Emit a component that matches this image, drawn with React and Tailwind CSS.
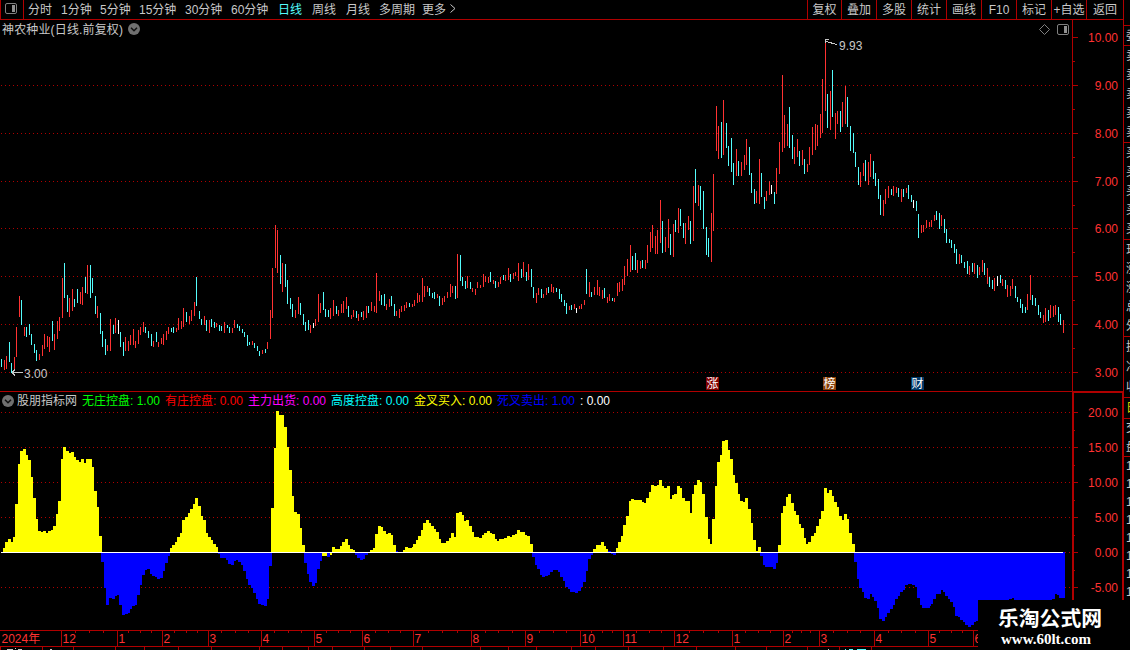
// src/App.jsx
import React from 'react';

const FONT = "font-['Liberation_Sans','Noto_Sans_CJK_SC',sans-serif]";
const LINE = '#b00000';
const LABEL = '#ff3232';

const PERIODS = [
  { label: '分时', width: 'w-[33px]' },
  { label: '1分钟', width: 'w-[39px]' },
  { label: '5分钟', width: 'w-[39px]' },
  { label: '15分钟', width: 'w-[46px]' },
  { label: '30分钟', width: 'w-[46px]' },
  { label: '60分钟', width: 'w-[47px]' },
  { label: '日线', width: 'w-[34px]', active: true },
  { label: '周线', width: 'w-[34px]' },
  { label: '月线', width: 'w-[33px]' },
  { label: '多周期', width: 'w-[43px]' },
  { label: '更多', width: 'w-[28px]' },
];

const TOOLS = [
  { label: '复权', width: 'w-[34px]' },
  { label: '叠加', width: 'w-[35px]' },
  { label: '多股', width: 'w-[35px]' },
  { label: '统计', width: 'w-[35px]' },
  { label: '画线', width: 'w-[35px]' },
  { label: 'F10', width: 'w-[35px]' },
  { label: '标记', width: 'w-[35px]' },
  { label: '+自选', width: 'w-[35px]' },
  { label: '返回', width: 'w-[37px]' },
];

const INDICATORS = [
  { label: '无庄控盘: 1.00', color: 'text-[#00ff00]', width: 'w-[83px]' },
  { label: '有庄控盘: 0.00', color: 'text-[#ff0000]', width: 'w-[83px]' },
  { label: '主力出货: 0.00', color: 'text-[#ff00ff]', width: 'w-[83px]' },
  { label: '高度控盘: 0.00', color: 'text-[#00ffff]', width: 'w-[83px]' },
  { label: '金叉买入: 0.00', color: 'text-[#ffff00]', width: 'w-[83px]' },
  { label: '死叉卖出: 1.00', color: 'text-[#0000ff]', width: 'w-[83px]' },
  { label: ': 0.00', color: 'text-white', width: 'w-[40px]' },
];

// x, direction (r = up, c = down, w = flat), high-low
const CANDLES = `
1c359-367 4r360-370 6r356-369 9c342-362 11c363-373 14r357-369 16r327-357 19r296-317 21c300-325 24r327-336
26c327-337 29c324-335 31c334-345 34c344-353 36c350-361 39r354-360 42r345-356 44r334-349 47r336-347 49r337-352
52c321-341 54r334-350 57r321-339 59r317-331 62r278-318 64c263-298 67c295-312 69r298-317 72r289-311 74c299-307
77c289-303 80r292-304 82r287-305 85c277-293 87r265-294 90c265-298 92c278-293 95c296-314 97r306-318 100c313-334
102c331-347 105c339-355 107r345-351 110r319-351 113c325-334 115r318-333 118w320-334 120c332-347 123c342-356
125r337-351 128r341-351 130r335-345 133r329-345 135r341-348 138r330-344 140r327-335 143r322-332 145c327-333
148c331-338 151c334-346 153r341-347 156c332-342 158r342-347 161r338-344 163r334-345 166r331-340 168r327-334
171c328-332 173c327-333 176r328-332 178r318-330 181r321-329 183r308-327 186c312-322 189r316-324 191r310-321
194r302-316 196c277-306 199c311-319 201c319-325 204r316-325 206c320-331 209r320-333 211c319-327 214c322-328
216r323-327 219c325-331 221c326-331 224r322-333 227c325-328 229c327-333 232r328-333 234r320-328 237c324-328
239c326-331 242c329-333 244c332-337 247c335-346 249c342-345 252r341-345 254c343-348 257c346-351 259c351-356
262r350-354 265c349-353 267r342-349 270r310-339 272r268-318 275r225-268 277r230-273 280c255-284 282r263-292
285c264-287 287c280-304 290c298-309 292c304-317 295r310-318 298r297-314 300c303-315 303c314-325 305c322-331
308c320-330 310r325-333 313w323-328 315r319-326 318r294-322 320r303-313 323c292-310 325c309-317 328c310-317
330r308-319 333r300-316 336c306-314 338r310-316 341r304-313 343r301-313 346r297-309 348c306-317 351r315-319
353r310-317 356c311-318 358r314-321 361c312-317 363r311-320 366r306-318 368c306-313 371r302-311 374r306-312
376r273-313 379r291-301 381c295-305 384c294-306 386r304-310 389r299-307 391c296-306 394c304-316 396r311-316
399r309-318 401r306-312 404r305-311 406r302-308 409c303-307 412r304-307 414r300-306 417r293-303 419r295-302
422r278-302 424r286-297 427r286-292 429c288-296 432c293-298 434c292-299 437r294-298 439c296-306 442r298-305
444r296-302 447r292-298 450r284-297 452r286-293 455c286-299 457r254-298 460c255-281 462c277-286 465c281-289
467r276-288 470c282-289 472r288-292 475r289-295 477r282-288 480r285-288 483r274-287 485r276-282 488r277-283
490c272-282 493r280-284 495c281-288 498r282-287 500r277-284 503c275-280 505r275-281 508r268-280 510c274-282
513r273-279 515r272-276 518r263-281 521c269-278 523r262-277 526c272-281 528r264-280 531c269-287 533c287-298
536r293-303 538r288-295 541c289-298 543r294-298 546r288-295 548c287-293 551r284-292 553r287-293 556c288-292
559c289-299 561c294-302 564c300-306 566c303-314 569r306-310 571c305-310 574r304-309 576w308-313 579r306-309
581r304-309 584r300-305 586c269-294 589r282-297 591c292-297 594r287-295 597r280-295 599r287-296 602r290-299
604c288-298 607r297-303 609r294-301 612c298-301 614r298-302 617r283-296 619r282-292 622r279-291 624r266-285
627r259-276 630r245-272 632c256-270 635c253-270 637r260-273 640r261-269 642c260-268 645r260-269 647r245-263
650r232-252 652r225-248 655r236-254 657r230-254 660r200-243 662c221-253 665r237-252 668r219-248 670c234-255
673r224-257 675c220-232 678r208-233 680c209-226 683c223-238 685r223-244 688r216-230 690c221-244 693r186-241
695c169-203 698r185-206 700c186-210 703c191-229 706c227-255 708c238-257 711r213-262 713r174-231 716r106-151
718r126-159 721c122-158 723r100-155 726c123-148 728c146-166 731c138-172 733c163-185 736r149-176 738c161-176
741r162-176 744r155-170 746r139-165 749c147-175 751c173-193 754c189-204 756r191-203 759r159-204 761c173-197
764c197-209 766r191-201 769r181-195 771w185-194 774c192-204 776r168-194 779r142-174 782r75-152 784r115-148
787r124-146 789c107-148 792c135-159 794r147-164 797r139-157 799c151-166 802r150-165 804c159-174 807r164-172
809r147-165 812r127-155 815r124-150 817r125-146 820r114-138 822r79-133 825r41-111 827c94-128 830r91-130
832c70-117 835r113-139 837r111-124 840c111-132 842r102-127 845r86-124 847c97-127 850c126-151 853c133-153
855c152-167 858c167-185 860r172-187 863r163-176 865c160-181 868r162-185 870r154-177 873c161-179 875c173-186
878c179-199 880c195-215 883r200-216 885r189-204 888r186-198 891c189-195 893r186-196 896r187-193 898c188-197
901r189-202 903c189-197 906r188-193 908c185-199 911c195-202 913w200-208 916c201-211 918c214-238 921r225-233
923r225-232 926r220-228 929r222-227 931r220-227 934r215-221 936c211-220 939c213-229 941r215-226 944c219-233
946c229-243 949c239-243 951c240-248 954c244-253 956c249-264 959r254-264 961c255-263 964c262-268 967c261-274
969r266-275 972c263-272 974r263-274 977c265-278 979r267-275 982r260-272 984c263-275 987r268-284 989c277-287
992c280-289 994r278-291 997w276-286 1000c275-283 1002r279-286 1005c280-289 1007r285-297 1010r286-296
1012r279-289 1015c286-298 1017c297-302 1020c299-308 1022c304-313 1025c307-313 1027r294-310 1030r275-300
1032c295-305 1035c298-306 1038c305-315 1040c312-318 1043r315-323 1045r308-322 1048c310-321 1050r305-318
1053r306-317 1055r305-315 1058c307-322 1060c314-325 1063r320-333`
  .trim()
  .split(/\s+/)
  .map((item) => {
    const [, x, dir, top, bottom] = item.match(/^(\d+)([rcw])(\d+)-(\d+)$/);
    return { x: +x, dir, top: +top, bottom: +bottom };
  });

const CANDLE_COLORS = { r: '#ff3232', c: '#54fcfc', w: '#ffffff' };

// Each run is "x:y x:y ... endX", a stepped outline measured from the zero line
const POSITIVE = [
  '3:548 5:542 8:539 11:542 13:537 15:504 18:464 20:451 23:449 26:455 28:460 31:477 33:498 36:519 38:531 41:532 43:531 46:533 48:531 51:530 53:526 56:514 58:501 61:459 63:447 66:451 69:453 71:452 74:457 76:460 79:462 81:459 84:463 86:459 92:467 94:491 97:507 99:536 102',
  '170:548 172:545 175:542 177:537 180:533 182:520 185:517 188:513 190:509 193:504 195:498 198:506 201:516 203:520 206:533 208:537 211:540 213:544 216:547 218',
  '271:508 274:448 276:411 279:415 284:427 287:447 289:470 292:496 294:512 297:514 300:528 302:545 305',
  '322:556 327', '330:555 332',
  '332:547 335:549 340:546 342:542 345:539 348:545 350:549 353:550 355',
  '370:550 373:548 375:534 378:526 381:527 383:531 386:534 388:533 391:535 393:545 396',
  '403:550 405:547 408:548 412:547 413:544 416:540 418:536 421:530 423:523 426:520 429:523 431:526 434:529 436:532 439:539 441:543 446:541 449:538 451:533 454:537 456:513 459:512 462:515 464:521 466:520 469:526 472:532 474:537 479:538 482:535 484:533 487:531 490:533 492:534 495:539 497:541 499:539 504:538 507:536 510:537 512:535 515:534 517:530 520:532 525:535 527:536 530:544 533',
  '593:549 596:545 601:542 604:546 606:549 608',
  '616:548 618:542 621:536 623:525 626:516 629:501 631:499 634:500 642:502 644:503 646:498 649:492 651:485 654:486 657:485 659:480 662:486 664:488 667:486 670:499 672:495 674:494 677:486 680:488 682:498 685:501 690:513 692:494 694:485 697:480 700:482 702:494 705:517 708:539 710:544 712:519 715:486 717:462 720:455 722:441 725:440 728:450 730:459 733:475 735:483 738:494 740:501 743:502 745:498 748:509 751:523 753:540 756:551 758:547 761',
  '778:545 781:513 783:506 786:497 788:494 791:503 794:511 796:515 799:524 801:528 804:538 806:544 808:542 811:536 814:533 816:526 819:519 821:511 824:488 827:493 829:490 832:496 834:502 837:507 839:516 842:520 844:514 847:519 849:533 852:544 855',
];

const NEGATIVE = [
  '101:562 104:588 106:605 109:598 112:599 115:596 117:595 119:605 122:615 125:614 128:613 130:609 132:606 135:605 137:595 140:585 142:575 145:570 147:569 150:574 152:576 155:577 157:579 160:578 163:571 165:563 168:556 170',
  '218:554 220:558 226:560 228:564 231:565 234:561 236:560 238:562 241:565 243:571 246:579 248:585 251:588 253:593 256:599 258:604 261:605 264:606 267:599 269:566 272',
  '304:563 307:574 309:582 312:586 315:583 317:569 320:561 322',
  '327:557 330', '355:555 357:558 360:560 363:559 365:555 368', '396:551 398',
  '532:557 535:565 537:569 540:575 542:577 545:576 548:575 550:572 553:570 558:572 560:577 563:581 565:587 568:589 570:592 575:593 578:591 581:587 583:582 586:571 588:559 591:555 593',
  '608:551 611:554 613:555 616',
  '760:556 763:565 765:567 773:569 776:563 778',
  '854:562 857:579 859:588 862:592 864:598 867:599 870:594 872:597 874:601 877:608 879:619 882:621 885:617 887:613 890:609 893:605 895:599 898:596 900:592 903:590 905:585 908:584 912:585 915:587 917:598 920:605 922:608 930:606 931:604 933:599 936:594 941:590 943:592 945:596 948:599 950:602 953:607 955:616 958:617 960:620 963:622 965:625 968:627 971:625 974:622 976:621 978:600 1009:599 1012:598 1014:600 1052:599 1055:594 1057:595 1059:598 1065',
];

const toPath = (run, base) => {
  const parts = run.split(' ');
  const end = parts.pop();
  const steps = parts.map((p) => p.split(':'));
  const line = steps.map(([x, y], i) => `H${x}V${y}${i === steps.length - 1 ? `H${end}` : ''}`).join('');
  return `M${steps[0][0]} ${base}${line}V${base}Z`;
};

const PRICE_TICKS = [
  [37, '10.00'], [85, '9.00'], [133, '8.00'], [181, '7.00'],
  [228, '6.00'], [276, '5.00'], [324, '4.00'], [372, '3.00'],
];
const INDICATOR_TICKS = [
  [412, '20.00'], [447, '15.00'], [482, '10.00'], [517, '5.00'], [552, '0.00'], [587, '-5.00'],
];

const MONTHS = [
  [61, '12'], [117, '1'], [162, '2'], [208, '3'], [261, '4'], [314, '5'], [362, '6'], [413, '7'], [471, '8'],
  [525, '9'], [580, '10'], [623, '11'], [674, '12'], [732, '1'], [783, '2'], [819, '3'], [874, '4'], [928, '5'], [973, '6'],
];
const WEEKS = [
  75, 89, 103, 128, 140, 151, 174, 186, 197, 221, 235, 248, 274, 288, 301, 326, 338, 350, 375, 388, 400, 428, 442,
  457, 485, 498, 512, 539, 553, 566, 591, 602, 612, 636, 649, 661, 689, 703, 718, 745, 758, 770, 792, 801, 810,
  833, 847, 860, 888, 901, 915, 939, 951, 962,
];
const FOOT_TICKS = [
  0, 42, 73, 115, 144, 178, 211, 259, 282, 308, 332, 364, 390, 422, 480, 508, 536, 571, 595, 628, 663, 696, 735,
  766, 807, 839, 871,
];

const BADGES = [
  { x: 706, text: '涨', fill: '#800000' },
  { x: 823, text: '榜', fill: '#8a4008' },
  { x: 911, text: '财', fill: '#003868' },
];

const DotRow = ({ y, from = 1 }) => (
  <path d={`M${from} ${y + 0.5}H1070`} stroke={LINE} strokeWidth="1" strokeDasharray="1 3" />
);

const PanelIcon = () => (
  <svg className="w-3 h-[11px] block" viewBox="0 0 12 11" fill="none">
    <rect x="0.5" y="0.5" width="11" height="10" rx="1.5" stroke="#808080" />
    <rect x="7" y="2" width="3" height="7" fill="#909090" />
  </svg>
);

const ChevronBadge = () => (
  <svg className="w-3 h-3 block" viewBox="0 0 12 12" fill="none">
    <circle cx="6" cy="6" r="6" fill="#707070" />
    <path d="M3 4.7L6 7.7L9 4.7" stroke="#101010" strokeWidth="1.5" />
  </svg>
);

const Toolbar = () => (
  <div className="flex h-5 w-[1124px] border-b border-r border-[#b00000] leading-[21px] text-[#c8c8c8]">
    <div className="flex w-6 shrink-0 border-x border-[#b00000] pl-1 pt-[3px]">
      <PanelIcon />
    </div>
    <div className="flex items-start pl-1">
      {PERIODS.map((p) => (
        <span key={p.label} className={`${p.width} shrink-0 whitespace-nowrap ${p.active ? 'text-[#54fcfc]' : ''}`}>
          {p.label}
        </span>
      ))}
      <svg className="w-[6px] h-[9px] mt-[4px]" viewBox="0 0 6 9" fill="none">
        <path d="M0.5 0.5L5 4.5L0.5 8.5" stroke="#c8c8c8" />
      </svg>
    </div>
    <div className="ml-auto flex h-[19px]">
      {TOOLS.map((tool) => (
        <span key={tool.label} className={`${tool.width} border-l border-[#b00000] text-center whitespace-nowrap`}>
          {tool.label}
        </span>
      ))}
    </div>
  </div>
);

const PriceChart = () => (
  <svg className="block w-[1072px] h-[353px]" viewBox="0 38 1072 353" shapeRendering="crispEdges">
    {PRICE_TICKS.slice(1).map(([y]) => (
      <DotRow key={y} y={y} />
    ))}
    {CANDLES.map((c) => (
      <rect key={c.x} x={c.x} y={c.top} width="1" height={c.bottom - c.top} fill={CANDLE_COLORS[c.dir]} />
    ))}
    {/* High and low markers */}
    <g stroke="#c8c8c8" fill="none">
      <path d="M825.5 43V39.5H829M826 41.5L837 44.5" />
      <path d="M12 372.5H23M12 372.5L15 369.5M12 372.5L15 375.5" />
    </g>
    <g fill="#c8c8c8" fontSize="12">
      <text x="839" y="50">9.93</text>
      <text x="24" y="378">3.00</text>
    </g>
    {BADGES.map((b) => (
      <g key={b.text}>
        <rect x={b.x} y="377" width="13" height="13" fill={b.fill} />
        <text x={b.x + 0.5} y="388" fontSize="12" fill="#ffffff">{b.text}</text>
      </g>
    ))}
  </svg>
);

const ControlChart = () => (
  <svg className="block w-[1072px] h-[222px]" viewBox="0 408 1072 222" shapeRendering="crispEdges">
    {INDICATOR_TICKS.map(([y]) => (
      <DotRow key={y} y={y} from={y === 552 ? 1065 : 1} />
    ))}
    {POSITIVE.map((run) => (
      <path key={run} d={toPath(run, 552)} fill="#ffff00" />
    ))}
    {NEGATIVE.map((run) => (
      <path key={run} d={toPath(run, 552)} fill="#0000ff" />
    ))}
    <rect x="1" y="552" width="1062" height="1" fill="#ffffff" />
  </svg>
);

const TimeAxis = () => (
  <svg className="block w-[1072px] h-5" viewBox="0 630 1072 20" shapeRendering="crispEdges">
    <path d="M0 630.5H1072M0 646.5H1072" stroke={LINE} />
    {MONTHS.map(([x]) => (
      <rect key={x} x={x} y="631" width="1" height="15" fill={LINE} />
    ))}
    {WEEKS.map((x) => (
      <rect key={x} x={x} y="631" width="1" height="2" fill={LINE} />
    ))}
    {FOOT_TICKS.map((x) => (
      <rect key={x} x={x} y="647" width="1" height="3" fill={LINE} />
    ))}
    <g fill={LABEL} fontSize="12">
      <text x="1.5" y="643">2024年</text>
      {MONTHS.map(([x, label]) => (
        <text key={x} x={x + 1.5} y="643">{label}</text>
      ))}
    </g>
    {/* Tops of the row that is cut off by the window edge */}
    <path d="M7 649.5H13M15 648.5H16M18 649.5H22M50 649.5H52M828 649.5H829" stroke="#c8c8c8" />
    <path d="M845 649.5H846M849 649.5H853M857 649.5H866" stroke="#54fcfc" />
  </svg>
);

const ValueAxis = () => (
  <svg className="block w-[51px] h-[630px] shrink-0" viewBox="1072 20 51 630" shapeRendering="crispEdges">
    <rect x="1072" y="20" width="1" height="371" fill={LINE} />
    <path d="M1073 650V392H1123" stroke={LINE} strokeWidth="2" fill="none" />
    <rect x="1122" y="391" width="1" height="259" fill={LINE} />
    {[...PRICE_TICKS, ...INDICATOR_TICKS].map(([y, label]) => (
      <g key={y}>
        <rect x="1073" y={y} width="5" height="1" fill={LINE} />
        <text x="1118" y={y + 5} textAnchor="end" fontSize="12" fill={LABEL}>{label}</text>
      </g>
    ))}
    {[61, 109, 157, 205, 252, 300, 348, 430, 465, 500, 535, 570].map((y) => (
      <rect key={y} x="1073" y={y} width="2" height="1" fill={LINE} />
    ))}
  </svg>
);

const QuoteGroup = ({ rows, className }) => (
  <div className={`flex flex-col justify-around border-b border-[#b00000] pl-[2px] leading-3 ${className}`}>
    {rows.map((row, i) => (
      <span key={i} className="w-3">{row}</span>
    ))}
  </div>
);

// Only the first pixels of the quote panel fit in the window
const QuoteStrip = () => (
  <div className="w-[7px] h-[630px] overflow-hidden border-l border-[#b00000] text-[#c8c8c8]">
    <QuoteGroup rows={[]} className="h-[6px]" />
    <QuoteGroup rows={['委']} className="h-5" />
    <QuoteGroup rows={['卖', '卖', '卖', '卖', '卖']} className="h-[97px]" />
    <QuoteGroup rows={['买', '买', '买', '买', '买']} className="h-[97px]" />
    <QuoteGroup rows={['现', '涨', '涨', '总', '外']} className="h-[97px]" />
    <QuoteGroup rows={['换', '净', '收']} className="h-[61px]" />
    <QuoteGroup rows={['日']} className="h-[21px] text-[#d8d800]" />
    <QuoteGroup rows={['交', '盘']} className="h-[38px]" />
    <div className="flex flex-col pl-[2px] leading-[18px]">
      {[1, 2, 3, 4, 5, 6, 7, 8].map((n) => (
        <span key={n}>1</span>
      ))}
    </div>
  </div>
);

const App = () => {
  return (
    <div className={`relative w-[1130px] h-[650px] overflow-hidden bg-black text-[12px] ${FONT}`}>
      <Toolbar />
      <div className="flex">
        <div className="w-[1072px] shrink-0">
          {/* Stock title */}
          <div className="flex h-[18px] items-center justify-between pl-[2px] pr-[3px] text-[#c8c8c8]">
            <div className="flex items-center">
              <span className="w-[126px] pt-[2px] tracking-[0.15px] whitespace-nowrap">神农种业(日线.前复权)</span>
              <ChevronBadge />
            </div>
            <div className="flex items-center gap-[7px]">
              <svg className="w-[11px] h-[11px]" viewBox="0 0 11 11" fill="none">
                <path d="M5.5 0.5L10.5 5.5L5.5 10.5L0.5 5.5Z" stroke="#808080" />
              </svg>
              <PanelIcon />
            </div>
          </div>
          <PriceChart />
          {/* Indicator header */}
          <div className="flex h-[17px] items-center border-t border-[#b00000] pl-[2px] pt-px whitespace-nowrap">
            <ChevronBadge />
            <span className="ml-[3px] w-[65px] text-[#c8c8c8]">股朋指标网</span>
            {INDICATORS.map((item) => (
              <span key={item.label} className={`${item.width} ${item.color}`}>{item.label}</span>
            ))}
          </div>
          <ControlChart />
          <TimeAxis />
        </div>
        <ValueAxis />
        <QuoteStrip />
      </div>
      {/* Site watermark over the corner */}
      <div className="absolute left-[978px] top-[600px] h-[50px] w-[152px] bg-black pl-5 pt-[7px] text-white">
        <div className="text-[20.8px] leading-6 font-bold whitespace-nowrap">乐淘公式网</div>
        <div className="pl-[3px] font-['Liberation_Serif',serif] text-[15px] leading-4 font-bold">www.60lt.com</div>
      </div>
    </div>
  );
};

export default App;
